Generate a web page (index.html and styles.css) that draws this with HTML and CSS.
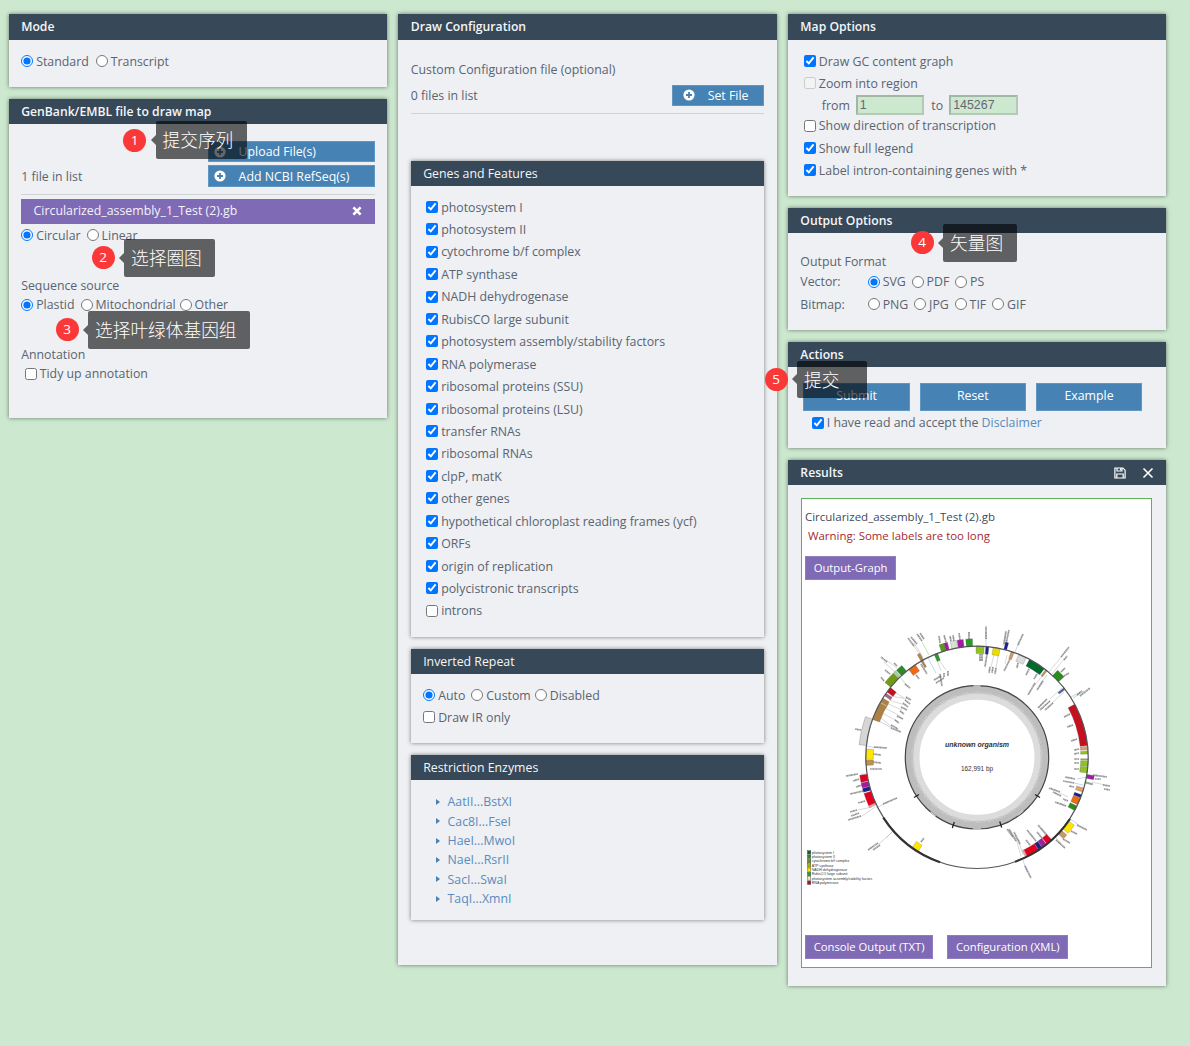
FILE: index.html
```html
<!DOCTYPE html>
<html lang="en">
<head>
<meta charset="utf-8">
<title>Draw organelle genome map</title>
<link rel="stylesheet" href="styles.css">
</head>
<body>
<svg class="defs" width="0" height="0">
  <symbol id="plus" viewBox="0 0 12 12"><circle cx="6" cy="6" r="5.6" fill="#fff"/><path d="M6 3v6M3 6h6" stroke="#4682b4" stroke-width="1.8"/></symbol>
</svg>
<main class="columns">
  <div class="column">
    <section class="panel mode">
      <h2>Mode</h2>
      <div class="row first"><label class="g7"><input type="radio" name="mode" checked>Standard</label><label><input type="radio" name="mode">Transcript</label></div>
    </section>
    <section class="panel genbank">
      <h2>GenBank/EMBL file to draw map</h2>
      <div class="files">
        <span class="count">1 file in list</span>
        <div class="file-buttons">
          <button class="add"><svg><use href="#plus"/></svg>Upload File(s)</button>
          <button class="add"><svg><use href="#plus"/></svg>Add NCBI RefSeq(s)</button>
        </div>
      </div>
      <hr>
      <div class="file-item">Circularized_assembly_1_Test (2).gb<svg viewBox="0 0 10 10"><path d="M1.4 1.4l7.2 7.2M8.6 1.4L1.4 8.6" stroke="#fff" stroke-width="2.7"/></svg></div>
      <div class="row shape"><label><input type="radio" name="shape" checked>Circular</label><label><input type="radio" name="shape">Linear</label></div>
      <div class="row source-title">Sequence source</div>
      <div class="row source"><label><input type="radio" name="src" checked>Plastid</label><label class="g4"><input type="radio" name="src">Mitochondrial</label><label><input type="radio" name="src">Other</label></div>
      <div class="row annotation-title">Annotation</div>
      <div class="row tidy"><label><input type="checkbox">Tidy up annotation</label></div>
    </section>
  </div>

  <div class="column">
    <section class="panel draw">
      <h2>Draw Configuration</h2>
      <div class="row custom-title">Custom Configuration file (optional)</div>
      <div class="set-file"><span>0 files in list</span><button class="add"><svg><use href="#plus"/></svg>Set File</button></div>
      <hr>
      <section class="panel sub genes">
        <h3>Genes and Features</h3>
        <div class="list">
          <label><input type="checkbox" checked>photosystem I</label>
          <label><input type="checkbox" checked>photosystem II</label>
          <label><input type="checkbox" checked>cytochrome b/f complex</label>
          <label><input type="checkbox" checked>ATP synthase</label>
          <label><input type="checkbox" checked>NADH dehydrogenase</label>
          <label><input type="checkbox" checked>RubisCO large subunit</label>
          <label><input type="checkbox" checked>photosystem assembly/stability factors</label>
          <label><input type="checkbox" checked>RNA polymerase</label>
          <label><input type="checkbox" checked>ribosomal proteins (SSU)</label>
          <label><input type="checkbox" checked>ribosomal proteins (LSU)</label>
          <label><input type="checkbox" checked>transfer RNAs</label>
          <label><input type="checkbox" checked>ribosomal RNAs</label>
          <label><input type="checkbox" checked>clpP, matK</label>
          <label><input type="checkbox" checked>other genes</label>
          <label><input type="checkbox" checked>hypothetical chloroplast reading frames (ycf)</label>
          <label><input type="checkbox" checked>ORFs</label>
          <label><input type="checkbox" checked>origin of replication</label>
          <label><input type="checkbox" checked>polycistronic transcripts</label>
          <label><input type="checkbox">introns</label>
        </div>
      </section>
      <section class="panel sub repeat">
        <h3>Inverted Repeat</h3>
        <div class="row first"><label><input type="radio" name="ir" checked>Auto</label><label class="g4"><input type="radio" name="ir">Custom</label><label><input type="radio" name="ir">Disabled</label></div>
        <div class="row"><label><input type="checkbox">Draw IR only</label></div>
      </section>
      <section class="panel sub enzymes">
        <h3>Restriction Enzymes</h3>
        <ul>
          <li>AatII...BstXI</li><li>Cac8I...FseI</li><li>HaeI...MwoI</li><li>NaeI...RsrII</li><li>SacI...SwaI</li><li>TaqI...XmnI</li>
        </ul>
      </section>
    </section>
  </div>

  <div class="column">
    <section class="panel map">
      <h2>Map Options</h2>
      <div class="row first"><label><input type="checkbox" checked>Draw GC content graph</label></div>
      <div class="row"><label><input type="checkbox" disabled>Zoom into region</label></div>
      <div class="range"><span>from</span><input type="text" value="1"><span class="to">to</span><input type="text" value="145267"></div>
      <div class="row direction"><label><input type="checkbox">Show direction of transcription</label></div>
      <div class="row"><label><input type="checkbox" checked>Show full legend</label></div>
      <div class="row"><label><input type="checkbox" checked>Label intron-containing genes with *</label></div>
    </section>
    <section class="panel output">
      <h2>Output Options</h2>
      <div class="row format-title">Output Format</div>
      <div class="row"><span class="kind">Vector:</span><label><input type="radio" name="fmt" checked>SVG</label><label><input type="radio" name="fmt">PDF</label><label><input type="radio" name="fmt">PS</label></div>
      <div class="row"><span class="kind">Bitmap:</span><label><input type="radio" name="fmt">PNG</label><label><input type="radio" name="fmt">JPG</label><label><input type="radio" name="fmt">TIF</label><label><input type="radio" name="fmt">GIF</label></div>
    </section>
    <section class="panel actions">
      <h2>Actions</h2>
      <div class="action-buttons"><button>Submit</button><button>Reset</button><button>Example</button></div>
      <div class="row accept"><label><input type="checkbox" checked>I have read and accept the&nbsp;<a>Disclaimer</a></label></div>
    </section>
    <section class="panel results">
      <h2>Results
        <span class="tools">
          <svg viewBox="0 0 12 12" width="12" height="12" fill="none" stroke="#fff" stroke-width="1.2"><path d="M.9 1h8L11.100 3.200V11H.9z"/><path d="M3 1v3h5V1M2.800 11V7h6.400v4"/><path d="M6.700 1v2.500"/></svg>
          <svg viewBox="0 0 12 12" width="12" height="12"><path d="M1.500 1.500l9 9M10.500 1.500l-9 9" stroke="#fff" stroke-width="1.600"/></svg>
        </span>
      </h2>
      <div class="result-box">
        <div class="result-name">Circularized_assembly_1_Test (2).gb</div>
        <div class="warning">Warning: Some labels are too long</div>
        <button class="purple">Output-Graph</button>
        <svg class="genome" viewBox="803 590 348 340" width="348" height="340">
          <g id="leaders"></g>
          <circle cx="977" cy="757.300" r="64.700" fill="none" stroke="#dcdcdc" stroke-width="14.500"/>
          <circle cx="977" cy="757.300" r="67.800" fill="none" stroke="#bdbdbd" stroke-width="7.500"/>
          <circle cx="977" cy="757.300" r="64.500" fill="none" stroke="#c9c9c9" stroke-width="2.500" stroke-dasharray="2 1 4 2 1 2"/>
          <circle cx="977" cy="757.300" r="71.700" fill="none" stroke="#444" stroke-width="1.200"/>
          <g stroke="#222" stroke-width="1.300"><path d="M914 797.500l5-3M952.300 828l2-6M1035 794.500l5 3M999.700 821.500l2 6"/></g>
          <g stroke="#ccc" stroke-width="1.500"><path d="M973.500 686h7M973 829h8M930.500 812l5 4M1018 815l5-4"/></g>
          <g id="genes"></g>
          <circle cx="977" cy="757.300" r="111.200" fill="none" stroke="#555" stroke-width="1.200"/>
          <path d="M883.300 817.700A111.200 111.200 0 0 0 940 862.300M1070 819A111.200 111.200 0 0 1 1015 861.700" fill="none" stroke="#333" stroke-width="2.200"/>
          <text class="organism" x="977" y="747.300" textLength="64" lengthAdjust="spacingAndGlyphs">unknown organism</text>
          <text class="length" x="977" y="770.700" textLength="32" lengthAdjust="spacingAndGlyphs">162,991 bp</text>
          <g id="legend"></g>
        </svg>
        <div class="downloads"><button class="purple">Console Output (TXT)</button><button class="purple">Configuration (XML)</button></div>
      </div>
    </section>
  </div>
</main>

<div class="note n1"><b>1</b><span>提交序列</span></div>
<div class="note n2"><b>2</b><span>选择圈图</span></div>
<div class="note n3"><b>3</b><span>选择叶绿体基因组</span></div>
<div class="note n4"><b>4</b><span>矢量图</span></div>
<div class="note n5"><b>5</b><span>提交</span></div>
<script src="genome.js"></script>
</body>
</html>
```
FILE: styles.css
```css
* { box-sizing: border-box; }
body {
  margin: 0; width: 1190px; height: 1046px; overflow: hidden; position: relative;
  background: #cce8cf; color: #5a6472;
  font: 12.33px/22.4px "Open Sans", "Noto Sans", sans-serif;
}
.defs { position: absolute; }
.columns { display: flex; gap: 11.4px; padding: 14.4px 0 0 8.800px; align-items: flex-start; }
.column { width: 378.2px; display: flex; flex-direction: column; gap: 12px; }
.column:last-child { gap: 12.300px; }
.panel { background: #eef0f3; box-shadow: 0 0 4px rgba(0,0,0,.5); padding: 0 12.4px; }
h2, h3 {
  margin: 0 -12.4px; padding: 0 12.400px; height: 25.200px; line-height: 26px;
  background: #374858; color: #f4f6f8; font-size: 12.2px; font-weight: 650;
}
h3 { font-weight: 500; font-size: 12.33px; line-height: 25px; }
.row { height: 22.4px; display: flex; align-items: center; gap: 6px; white-space: nowrap; }
.row.first { margin-top: 11px; }
label { display: flex; align-items: center; white-space: nowrap; }
input[type=radio], input[type=checkbox] { width: 12px; height: 12px; margin: 0 3px 2px 0; flex: none; }
.g7 { margin-right: 1px; }
.g4 { margin-right: -2px; }
hr { border: 0; border-top: 1px solid #d0d2d4; margin: 0; }
button { font: inherit; border: 1px solid #5f97c4; background: #4682b4; color: #fff; padding: 0; }
.add { display: flex; align-items: center; height: 21.600px; line-height: 19px; padding-left: 5px; }
.add svg { width: 12px; height: 12px; margin-right: 13px; }

.mode { height: 72.600px; }
.genbank { height: 319.300px; }
.files { display: flex; justify-content: space-between; align-items: flex-end; height: 62.800px; }
.count { position: relative; top: 1.500px; }
.file-buttons { display: flex; flex-direction: column; gap: 3px; width: 167px; }
.genbank hr { margin-top: 7.200px; }
.file-item {
  margin-top: 4px; height: 24.500px; line-height: 24px; padding: 0 12.400px;
  background: #7f6ab5; color: #f4f2fa; display: flex; justify-content: space-between; align-items: center;
}
.file-item svg { width: 10px; height: 10px; }
.shape { margin-top: 1px; }
.source-title { margin-top: 27.700px; }
.source { margin-top: -2.800px; }
.annotation-title { margin-top: 27.300px; }
.tidy { margin-top: -3px; padding-left: 3.500px; }

.draw { height: 950.300px; }
.custom-title { margin-top: 19.300px; }
.set-file { display: flex; justify-content: space-between; height: 22px; margin-top: 3.300px; }
.set-file .add { width: 92.500px; padding-left: 10px; }
.draw > hr { margin-top: 6.500px; }
.sub { margin-bottom: 12px; }
.genes { margin-top: 46.500px; height: 476px; }
.list { padding: 10.800px 0 0 3px; }
.list label { height: 22.450px; }
.repeat { height: 94.300px; }
.enzymes { height: 165.500px; }
ul { list-style: none; margin: 0; padding: 12.400px 0 0 12.400px; color: #5b8bbd; }
li { height: 19.350px; line-height: 19.350px; display: flex; align-items: center; }
li::before { content: ""; border: 3.500px solid transparent; border-left: 4.500px solid #4682b4; border-right: 0; margin-right: 8px; }

.map { height: 181.500px; }
.map .row { padding-left: 3.500px; }
.range { display: flex; align-items: center; height: 19.500px; padding-left: 21.500px; }
.range span { position: relative; top: 1px; }
.range input { font: 12.400px "Liberation Sans", sans-serif; color: #667; width: 68.500px; height: 19.500px; border: 2px solid; border-color: #a2b6a6 #b4cab7 #b4cab7 #a2b6a6; background: #cce8cf; padding: 0 2px; margin: 0 0 0 6px; }
.range .to { margin-left: 7px; }
.map .direction { margin-top: .5px; }
.output { height: 121.500px; }
.format-title { margin-top: 17.500px; }
.format-title + .row { margin-top: -1.800px; }
.output .row { gap: 5.800px; }
.kind { width: 61.500px; }
.actions { height: 105.700px; }
.action-buttons { display: flex; justify-content: space-between; padding: 15.500px 11.500px 0 3px; }
.action-buttons button { width: 106.500px; height: 28px; }
.accept { margin-top: 1.800px; padding-left: 11.400px; }
a { color: #5b8bbd; }
.results { height: 526px; }
.results h2 { display: flex; justify-content: space-between; }
.tools { display: flex; gap: 16px; align-items: center; }
.result-box {
  margin: 12.500px 1.500px 0 .600px; height: 470.500px; border: 1px solid #5cb15c; background: #fff;
  padding: 7px 3px; display: flex; flex-direction: column; align-items: flex-start;
}
.result-name { color: #3f4a5a; height: 22px; font-size: 11.500px; }
.warning { color: #a42a30; padding-left: 3px; line-height: 15px; font-size: 11.450px; }
.purple { background: #7f6ab5; border-color: #8f7dc0; height: 24px; padding: 0 7.700px; font-size: 11.250px; }
.result-box > .purple { margin-top: 13.500px; }
.genome { display: block; flex: none; margin: 9.800px 0 -2px -2px; }
.result-box > .downloads { display: flex; gap: 14px; margin-top: 7.500px; flex: none; }
.organism, .length { font: 6.800px "Liberation Sans", sans-serif; text-anchor: middle; fill: #333; }
.organism { font-weight: 700; font-style: italic; }
.legend-text { font: 3.550px "Liberation Sans", sans-serif; fill: #333; }

.note { position: absolute; display: flex; align-items: center; gap: 9.500px; height: 37.500px; }
.note b { width: 23px; height: 23px; border-radius: 50%; background: #fb3838; color: #fff; font: 13.500px/22px "Open Sans", sans-serif; text-align: center; }
.note span {
  position: relative; height: 37.500px; padding: 0 13.500px 0 7px; border-radius: 2px; background: rgba(0,0,0,.6);
  color: #fff; font: 300 17.700px/36.500px "Noto Sans CJK SC", sans-serif;
}
.note span::before { content: ""; position: absolute; left: -5px; top: 13.700px; border: 5px solid transparent; border-right-color: rgba(0,0,0,.6); border-left: 0; }
.n1 { left: 123px; top: 121.300px; }
.n2 { left: 91.500px; top: 239px; }
.n3 { left: 55.500px; top: 311px; }
.n4 { left: 910.500px; top: 224px; }
.n5 { left: 764.500px; top: 360.500px; }
.n5 span { padding-right: 28px; }
```
FILE: genome.js
```js
const NS = 'http://www.w3.org/2000/svg';
const CX = 977, CY = 757.3, R = 111.2;
function add(parent, tag, attrs, text) {
  const el = document.createElementNS(NS, tag);
  for (const k in attrs) el.setAttribute(k, attrs[k]);
  if (text) el.textContent = text;
  document.getElementById(parent).appendChild(el);
}
// Each gene: a point in its block, its length along the circle, its colour.
const genes = [
  [942.7,647.7,5,'#5b9a1a'],[946.7,646.7,3.5,'#a21ca2'],[954,644.5,6,'#d5e3d5'],[960.7,643.7,6,'#a21ca2'],[969.3,642.7,6.5,'#22a022'],
  [980,650.3,8,'#8fc31f'],[987,650.3,3,'#1d2088'],[901.5,670.5,7,'#2b8c22'],[897,674.5,3,'#a8d0a0'],[892,680.5,12,'#6f9c12'],
  [914.3,670.3,8,'#ee6a13'],[920.3,657,3,'#b08550'],[937.3,657.3,3.5,'#2a9a2a'],[922.7,662,2,'#b08550'],[891.7,692,5.5,'#c7101f'],
  [888.3,696.7,3,'#b0608f'],[880.2,710,23,'#ad8045'],[883,704,2,'#d0a868'],[865,731.3,28,'#d6d6d6'],[869.7,754.3,10,'#ffe600'],
  [996,651.7,7,'#e8dc00'],[1006,646.7,3,'#1d2088'],[1011.3,655.7,3,'#d9965a'],[1020.7,660,8,'#dddddd'],[1035,667,17,'#00692c'],
  [1044,673.3,2,'#c09060'],[1058.3,676,9,'#2b8c22'],[1061.5,691,2,'#4860b0'],[1078.3,725.7,42,'#c7101f'],[1083.7,748.3,3.5,'#d9a566'],
  [1083.7,752.7,3,'#8fc31f'],[1084,759.5,1.5,'#8fc31f'],[1083.5,763.5,5,'#8fc31f'],[1083,769.5,6,'#8fc31f'],
  [869.7,762.7,5,'#c09050'],[863.3,778.3,7,'#e60020'],[865.3,784.7,5,'#a21ca2'],[866.7,789.3,4,'#1d2088'],[869.3,798.7,13,'#e60020'],
  [872.3,805.3,2,'#ff9aa8'],[917.3,846.3,7,'#ffe600'],[1090,777,4,'#a21ca2'],[1089,783.3,1.5,'#7cc07c'],[1079.7,789,4,'#dba66b'],
  [1077.7,795,3,'#1d2088'],[1075.3,799.7,7,'#ee6a13'],[1072.7,806.7,5,'#2b8c22'],[1068.3,827,10,'#ffe600'],[1062.7,834.7,5,'#c79a5c'],
  [1046.7,838.7,6,'#e60020'],[1041.7,842.3,5,'#a21ca2'],[1038.3,845.7,4,'#1d2088'],[1031,850.3,13,'#e60020'],[1024.7,853.3,2,'#ff9aa8']
];
for (const [x, y, len, fill] of genes) {
  const a = Math.atan2(y - CY, x - CX), outer = Math.hypot(x - CX, y - CY) > R;
  const r0 = outer ? R : R - 7.5, r1 = r0 + 7.5, h = len / 2 / (r0 + 3.7);
  const p = (r, t) => (CX + r * Math.cos(t)).toFixed(2) + ' ' + (CY + r * Math.sin(t)).toFixed(2);
  add('genes', 'path', { fill, stroke: '#555', 'stroke-width': 0.25,
    d: `M${p(r0, a - h)}A${r0} ${r0} 0 0 1 ${p(r0, a + h)}L${p(r1, a + h)}A${r1} ${r1} 0 0 0 ${p(r1, a - h)}Z` });
}
// Thin connector lines: x1, y1, x2, y2, colour.
const grey = '#c4c4c4', blue = '#a9bdea', green = '#a5d68a';
const lines = [
  [986,646,986,635,blue],[1003,646,1006,634,blue],[1015,652,1019,642,blue],[1049,672,1062,656,grey],[1052,674,1064,659,grey],
  [1047,675,1039,686,blue],[1045,673,1034,686,grey],[1062,688,1050,699,grey],[1064,692,1052,703,grey],[1071,697,1080,692,green],[1073,698,1084,691,blue],
  [994,655,991,667,grey],[998,656,996,668,grey],[1007,655,1005,664,grey],[920,655,912,643,grey],[923,657,914,643,grey],[929,655,922,642,green],
  [928,658,936,673,blue],[937,660,941,671,grey],[939,660,946,670,grey],[897,668,886,660,grey],[895,672,884,662,grey],[901,678,907,686,green],
  [893,691,904,698,grey],[890,696,908,699,grey],[889,700,905,705,grey],[886,703,902,710,grey],[885,708,900,716,grey],[882,713,897,721,grey],
  [880,717,892,727,grey],[875,719,892,728,blue],[867,746,876,748,blue],[861,774,866,774,blue],[872,807,858,810,grey],[875,807,862,816,grey],
  [876,808,888,802,blue],[893,831,886,838,'#b28be0'],[889,835,879,844,grey],[1023,855,1018,839,grey],[1021,856,1015,835,grey],[1023,860,1027,872,blue],
  [1088,775,1098,776,blue],[1087,777,1077,779,blue],[1083,785,1074,783,blue],[1092,782,1105,785,grey],[1068,797,1060,793,grey],[1070,819,1079,825,blue],
  [1055,837,1061,843,grey],[1066,806,1060,803,grey],[1045,835,1041,828,grey]
];
for (const [x1, y1, x2, y2, stroke] of lines) add('leaders', 'path', { d: `M${x1} ${y1}L${x2} ${y2}`, stroke, 'stroke-width': 0.65 });
// Radial label marks.
const marks = [
  [940,643,939,636],[946,642,944,635],[951,641,950,636],[954,641,953,635],[960,640,959,633],[969,639,969,632],[986,639,986,626],[980,654,980,661],[982,654,982,661],[987,654,985,667],
  [990,667,989,673],[993,667,992,673],[996,668,995,674],[1006,644,1009,630],[1004,644,1006,631],[1018,645,1023,634],[1010,659,1004,671],[1018,663,1017,668],
  [1061,657,1069,647],[1064,660,1067,656],[1029,669,1026,675],[1037,674,1034,679],[1035,683,1028,695],[1043,681,1037,690],[1047,699,1038,708],[1050,701,1040,710],[1053,703,1045,710],
  [1061,672,1065,668],[1064,676,1069,673],[1077,695,1082,691],[1080,696,1090,688],[1070,714,1064,717],[1073,725,1067,727],[1077,739,1071,741],[1079,749,1074,750],[1079,753,1074,754],
  [914,646,908,638],[917,644,911,637],[922,641,917,634],[924,639,920,633],[921,664,927,674],[916,675,919,679],[934,680,941,676],[936,683,944,678],[940,674,942,686],[944,673,944,677],[948,671,948,676],
  [887,662,881,657],[897,666,894,663],[890,674,885,670],[884,681,881,677],[905,684,910,688],[906,697,911,700],[905,700,910,704],[903,703,908,707],[901,707,907,710],[900,711,904,714],[897,716,903,719],[895,720,899,723],[891,725,898,729],[891,728,901,732],
  [861,730,855,729],[874,747,887,748],[873,754,881,755],[873,762,881,763],[870,769,882,769],[858,774,846,776],[859,779,853,781],[862,785,856,787],[863,791,850,794],[865,801,858,803],
  [857,810,850,812],[859,813,851,816],[861,816,848,820],[883,804,897,798],[878,843,868,850],[880,845,873,850],[921,842,924,838],
  [1093,775,1107,777],[1095,779,1101,779],[1103,785,1110,786],[1104,789,1110,790],[1075,779,1065,777],[1074,783,1063,781],[1074,787,1069,786],[1060,792,1049,788],[1061,796,1053,792],[1068,801,1063,799],[1066,806,1055,802],
  [1077,825,1087,830],[1071,831,1077,834],[1063,839,1070,843],[1056,840,1065,848],[1047,835,1038,825],[1042,838,1037,832],[1036,841,1027,830],[1030,845,1026,840],[1020,844,1014,832],[1016,841,1009,829],[1013,837,1007,829],[1025,866,1031,878],
  [1079,759,1074,759],[1079,763,1074,763],[1079,769,1074,769]
];
for (const [x1, y1, x2, y2] of marks) add('leaders', 'path', { d: `M${x1} ${y1}L${x2} ${y2}`, stroke: '#777', 'stroke-width': 1.7, 'stroke-dasharray': '1.4 .3 .9 .2', opacity: 0.8 });

const legend = [['photosystem I','#00692c'],['photosystem II','#2b8c22'],['cytochrome b/f complex','#6f8c12'],['ATP synthase','#9db01a'],
  ['NADH dehydrogenase','#ffe600'],['RubisCO large subunit','#22a022'],['photosystem assembly/stability factors','#e9efb8'],['RNA polymerase','#b3101f']];
legend.forEach(([name, fill], i) => {
  const y = 852.4 + i * 4.32;
  add('legend', 'rect', { x: 807.4, y: y - 1.7, width: 3.4, height: 3.5, fill, stroke: '#444', 'stroke-width': 0.4 });
  add('legend', 'text', { x: 811.8, y: y + 1.3, class: 'legend-text' }, name);
});
```
